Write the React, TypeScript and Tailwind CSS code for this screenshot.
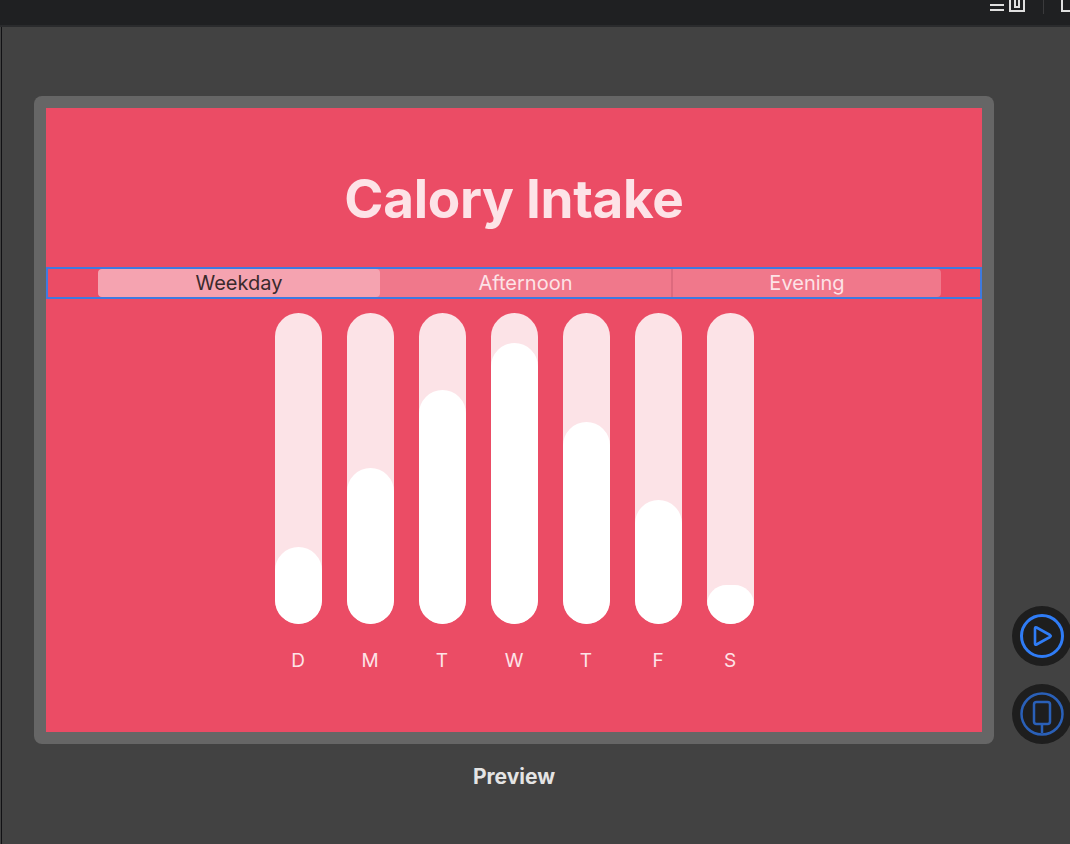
import type { ReactNode } from 'react';

const days = [
  { label: 'D', value: 77 },
  { label: 'M', value: 156 },
  { label: 'T', value: 234 },
  { label: 'W', value: 281 },
  { label: 'T', value: 202 },
  { label: 'F', value: 124 },
  { label: 'S', value: 39 },
];

const segments = [
  { name: 'Weekday', width: 'w-[282px]', active: true },
  { name: 'Afternoon', width: 'w-[291px]', active: false },
  { name: 'Evening', width: 'w-[270px]', active: false },
];

const RoundButton = ({ children }: { children: ReactNode }) => (
  <div className="w-[60px] h-[60px] rounded-full bg-[#1e1e1e] flex items-center justify-center">
    {children}
  </div>
);

const TopBar = () => (
  <div className="h-[27px] bg-[#1f2022] border-b-2 border-[#2a2b2d] flex justify-end items-start relative">
    <div className="flex items-start gap-[5px] mr-[18px]">
      <div className="flex flex-col gap-[3px] pt-[4px]">
        <div className="w-[14px] h-[2px] bg-[#e0e0e0]" />
        <div className="w-[14px] h-[2px] bg-[#e0e0e0]" />
      </div>
      <div className="w-[16px] h-[12px] border-2 border-t-0 border-[#e0e0e0] flex justify-center">
        <div className="w-[6px] h-[8px] border-2 border-t-0 border-[#e0e0e0]" />
      </div>
    </div>
    <div className="w-[1px] h-[14px] bg-[#3a3a3c] mr-[17px]" />
    <div className="w-[9px] h-[12px] border-2 border-t-0 border-r-0 border-[#e0e0e0]" />
  </div>
);

const Bars = () => (
  <div className="flex justify-center gap-[25px] mt-[14px]">
    {days.map((d, i) => (
      <div key={i} className="flex flex-col items-center w-[47px]">
        <div className="w-[47px] h-[311px] rounded-full bg-[#fce3e7] flex flex-col justify-end overflow-hidden">
          <div className="w-full rounded-full bg-white" style={{ height: d.value }} />
        </div>
        <div className="mt-[26px] text-[19px] leading-[22px] text-[#fde3e7]">{d.label}</div>
      </div>
    ))}
  </div>
);

export default function App() {
  return (
    <div
      className="w-[1070px] h-[844px] bg-[#424242] overflow-hidden relative"
      style={{ fontFamily: 'Inter, "Open Sans", sans-serif' }}
    >
      <TopBar />
      <div className="flex">
        <div className="w-[1px] h-[817px] ml-[1px] mr-[1px] bg-[#111114]" />
        <div className="pl-[31px] pt-[69px] flex flex-col items-center">
          <div className="w-[960px] h-[648px] rounded-[8px] bg-[#666666] p-[12px]">
            <div className="w-full h-full bg-[#eb4c65] flex flex-col">
              <div className="h-[159px] pt-[24px] flex items-center justify-center">
                <div className="text-[53px] font-bold tracking-[-0.3px] text-[#fde3e7]">
                  Calory Intake
                </div>
              </div>
              <div className="h-[32px] border-2 border-[#3f7ae0] pl-[50px] flex items-center">
                <div className="flex h-[28px] rounded-[4px] overflow-hidden bg-[#f0788b]">
                  {segments.map((s, i) => (
                    <div
                      key={s.name}
                      className={`${s.width} flex items-center justify-center text-[20px] ${
                        s.active
                          ? 'bg-[#f5a3b0] text-[#3a2a2c] rounded-[4px]'
                          : 'text-[#fde3e7]'
                      } ${i === 2 ? 'border-l-2 border-[#dd6a7e]' : ''}`}
                    >
                      {s.name}
                    </div>
                  ))}
                </div>
              </div>
              <Bars />
            </div>
          </div>
          <div className="mt-[17px] text-[21px] font-bold text-[#e4e4e4]">Preview</div>
        </div>
      </div>
      <div className="absolute left-[1012px] top-[606px] flex flex-col gap-[18px]">
        <RoundButton>
          <svg width="46" height="46" viewBox="0 0 46 46" fill="none">
            <circle cx="23" cy="23" r="20.5" stroke="#2f7cf6" strokeWidth="3" />
            <path
              d="M17.5 14.5 L31 22 Q32.5 23 31 24 L17.5 31.5 Q16 32.3 16 30.5 L16 15.5 Q16 13.7 17.5 14.5 Z"
              stroke="#2f7cf6"
              strokeWidth="2.6"
              strokeLinejoin="round"
            />
          </svg>
        </RoundButton>
        <RoundButton>
          <svg width="46" height="46" viewBox="0 0 46 46" fill="none">
            <circle cx="23" cy="23" r="20.5" stroke="#2a60b8" strokeWidth="2.5" />
            <rect x="15" y="11" width="16" height="22" rx="2.5" stroke="#2a60b8" strokeWidth="2.5" />
            <path d="M23 33 L23 42" stroke="#2a60b8" strokeWidth="2.5" />
          </svg>
        </RoundButton>
      </div>
    </div>
  );
}
